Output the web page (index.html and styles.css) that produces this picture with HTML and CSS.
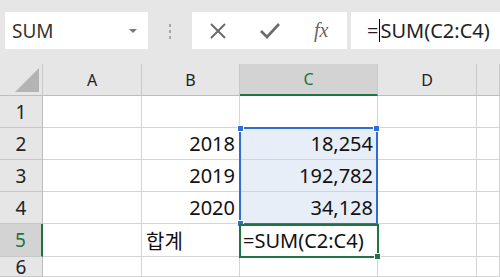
FILE: index.html
```html
<!DOCTYPE html>
<html lang="ko">
<head>
  <meta charset="UTF-8" />
  <title>SUM</title>
  <link rel="stylesheet" href="styles.css">
</head>
<body>
  <div class="toolbar">
    <div class="namebox">
      <span>SUM</span>
      <span class="arrow"></span>
    </div>
    <div class="grip"><i></i><i></i><i></i></div>
    <div class="buttons">
      <svg class="btn" width="20" height="20" viewBox="0 0 20 20"><path d="M3 3 L17 17 M17 3 L3 17" stroke="#6b6b6b" stroke-width="2" fill="none"/></svg>
      <svg class="btn" width="22" height="20" viewBox="0 0 22 20"><path d="M2 10 L8 16 L20 3" stroke="#6b6b6b" stroke-width="2.6" fill="none"/></svg>
      <span class="fx">fx</span>
    </div>
    <div class="formula"><span>=</span><span class="caret"></span><span>SUM(C2:C4)</span></div>
  </div>

  <div class="sheet">
    <div class="grid">
      <div class="hd corner"><span class="tri"></span></div>
      <div class="hd">A</div>
      <div class="hd">B</div>
      <div class="hd sel">C</div>
      <div class="hd">D</div>
      <div class="hd"></div>

      <div class="rh">1</div><div class="c"></div><div class="c"></div><div class="c"></div><div class="c"></div><div class="c"></div>
      <div class="rh">2</div><div class="c"></div><div class="c num">2018</div><div class="c num fill">18,254</div><div class="c"></div><div class="c"></div>
      <div class="rh">3</div><div class="c"></div><div class="c num">2019</div><div class="c num fill">192,782</div><div class="c"></div><div class="c"></div>
      <div class="rh">4</div><div class="c"></div><div class="c num">2020</div><div class="c num fill">34,128</div><div class="c"></div><div class="c"></div>
      <div class="rh sel">5</div><div class="c"></div><div class="c txt">합계</div><div class="c txt edit">=SUM(C2:C4)</div><div class="c"></div><div class="c"></div>
      <div class="rh">6</div><div class="c"></div><div class="c"></div><div class="c"></div><div class="c"></div><div class="c"></div>
    </div>

    <div class="range">
      <span class="h tl"></span><span class="h tr"></span><span class="h bl"></span>
    </div>
    <div class="active"><span class="h br"></span></div>
  </div>
</body>
</html>
```

FILE: styles.css
```css
body {
  margin: 0;
  width: 500px;
  height: 277px;
  overflow: hidden;
  background: #ffffff;
  font-family: "Noto Sans", "Noto Sans CJK KR", sans-serif;
  color: #222;
}
.toolbar {
  display: flex;
  align-items: flex-start;
  height: 64px;
  padding-top: 12px;
  box-sizing: border-box;
  background: #e6e6e6;
}
.namebox {
  display: flex;
  align-items: center;
  justify-content: space-between;
  width: 143px;
  height: 37px;
  margin-left: 5px;
  padding: 0 11px 0 7px;
  box-sizing: border-box;
  background: #fff;
  font-size: 19px;
  color: #333;
}
.namebox .arrow {
  width: 0;
  height: 0;
  border-left: 4px solid transparent;
  border-right: 4px solid transparent;
  border-top: 4px solid #777;
}
.grip {
  display: flex;
  flex-direction: column;
  gap: 3px;
  width: 44px;
  align-items: center;
  padding-top: 12px;
}
.grip i {
  width: 2px;
  height: 3px;
  background: #a8a8a8;
}
.buttons {
  display: flex;
  align-items: center;
  width: 155px;
  height: 37px;
  background: #fff;
}
.buttons .btn {
  display: block;
}
.buttons .btn:first-child {
  margin-left: 16px;
}
.buttons .btn:nth-child(2) {
  margin-left: 31px;
}
.fx {
  margin-left: 33px;
  font-family: "Liberation Serif", serif;
  font-style: italic;
  font-size: 20px;
  color: #666;
}
.formula {
  display: flex;
  align-items: center;
  flex: 1;
  height: 37px;
  margin-left: 4px;
  padding-left: 16px;
  background: #fff;
  font-size: 20px;
  color: #222;
  white-space: nowrap;
}
.caret {
  width: 1px;
  height: 23px;
  background: #000;
  margin: 0 0 0 1px;
}

.sheet {
  position: relative;
}
.grid {
  display: grid;
  grid-template-columns: 43px 99px 98px 138px 99px 23px;
  grid-template-rows: 32px 32px 32px 32px 32px 33px 20px;
}
.hd {
  display: flex;
  align-items: center;
  justify-content: center;
  background: #e6e6e6;
  border-right: 1px solid #c8c8c8;
  border-bottom: 1px solid #bdbdbd;
  font-size: 16px;
  color: #222;
}
.hd.sel {
  background: #d3d3d3;
  color: #217346;
  border-bottom: 2px solid #217346;
}
.corner {
  position: relative;
}
.tri {
  position: absolute;
  right: 3px;
  bottom: 3px;
  width: 0;
  height: 0;
  border-left: 24px solid transparent;
  border-bottom: 24px solid #b4b4b4;
}
.rh {
  display: flex;
  align-items: center;
  justify-content: center;
  background: #e6e6e6;
  border-right: 1px solid #bdbdbd;
  border-bottom: 1px solid #c8c8c8;
  font-size: 19px;
}
.rh.sel {
  background: #d3d3d3;
  color: #217346;
  border-right: 2px solid #217346;
}
.c {
  display: flex;
  align-items: center;
  border-right: 1px solid #d4d4d4;
  border-bottom: 1px solid #d4d4d4;
  font-size: 20px;
  color: #111;
  white-space: nowrap;
  overflow: visible;
}
.num {
  justify-content: flex-end;
  padding-right: 4px;
}
.txt {
  padding-left: 4px;
}
.fill {
  background: #e8eef8;
}
.edit {
  padding-left: 3px;
}

.range {
  position: absolute;
  left: 239px;
  top: 63px;
  width: 135px;
  height: 94px;
  border: 2px solid #2f6dd1;
}
.active {
  position: absolute;
  left: 239px;
  top: 160px;
  width: 136px;
  height: 30px;
  border: 2px solid #217346;
}
.h {
  position: absolute;
  width: 5px;
  height: 5px;
  background: #2f6dd1;
  border: 1px solid #fff;
}
.tl { left: -4px; top: -4px; }
.tr { right: -4px; top: -4px; }
.bl { left: -4px; bottom: -4px; }
.br {
  right: -4px;
  bottom: -4px;
  background: #217346;
}
```
